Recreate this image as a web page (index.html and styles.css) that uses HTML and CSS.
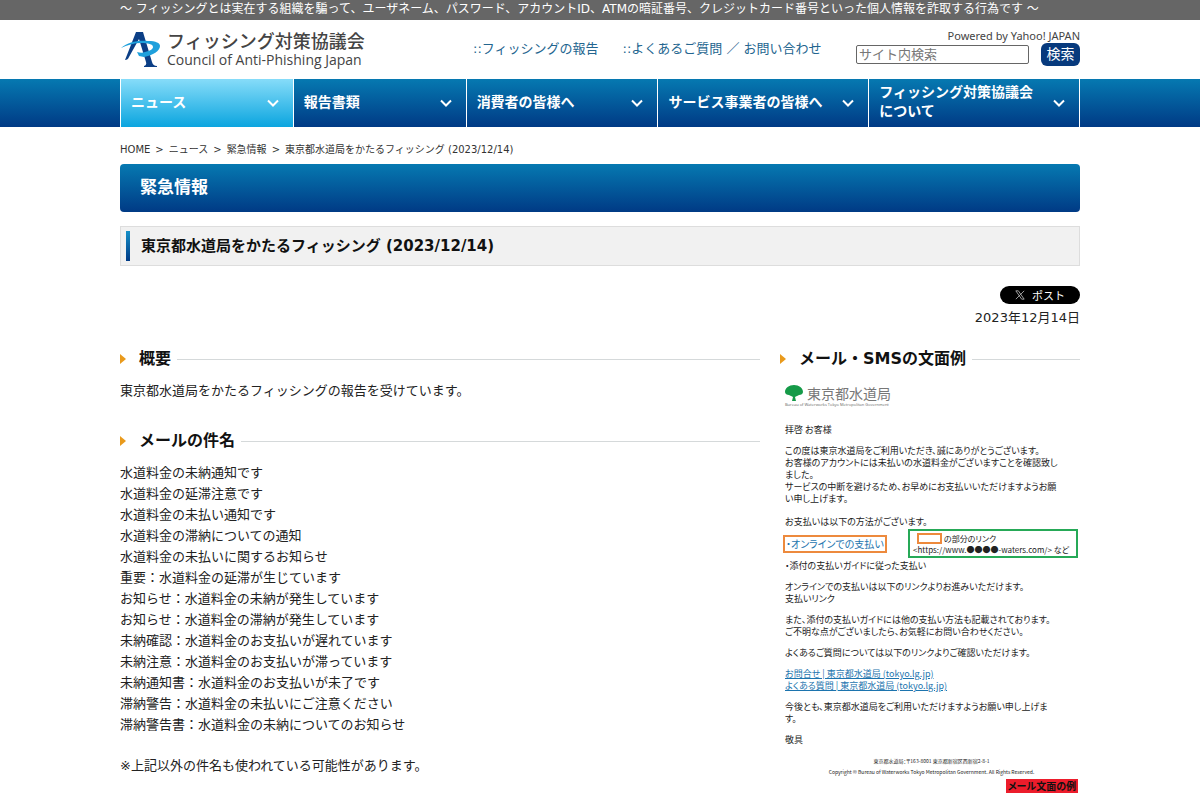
FILE: index.html
```html
<!DOCTYPE html>
<html lang="ja">
<head>
<meta charset="utf-8">
<title>フィッシング対策協議会 | 東京都水道局をかたるフィッシング</title>
<link rel="stylesheet" href="styles.css">
</head>
<body>
<div class="topbar"><p class="wrap">〜 フィッシングとは実在する組織を騙って、ユーザネーム、パスワード、アカウントID、ATMの暗証番号、クレジットカード番号といった個人情報を詐取する行為です 〜</p></div>
<header class="header wrap">
  <a class="logo" href="#">
    <svg class="logo-mark" viewBox="0 0 41 37" aria-hidden="true">
      <path fill="#0c3f86" d="M16 1h7l9 30q1 4 5 4v1H24v-1q3-1 2-4L19 8 9 26q-1 3-4 3l2-5z"/>
      <path fill="#1fa0dc" fill-rule="evenodd" d="M1 17C8 11 18 9 28 10c8 0 12 2 12 5 0 5-7 9-16 11l-5-1-2-4c3 1 6 1 8 0 5-1 8-3 8-5 0-3-5-4-12-4-7 0-14 2-20 5z"/>
    </svg>
    <span class="logo-text"><span class="logo-ja">フィッシング対策協議会</span><span class="logo-en">Council of Anti-Phishing Japan</span></span>
  </a>
  <nav class="links">
    <a href="#">::フィッシングの報告</a>
    <a href="#">::よくあるご質問 ／ お問い合わせ</a>
  </nav>
  <form class="search">
    <label for="q">Powered by Yahoo! JAPAN</label>
    <div class="search-row"><input id="q" type="text" placeholder="サイト内検索"><button type="button">検索</button></div>
  </form>
</header>
<nav class="gnav">
  <ul class="gnav-list wrap">
    <li class="current"><a href="#"><span>ニュース</span><svg viewBox="0 0 12 8"><path d="M1 1.500l5 5 5-5"/></svg></a></li>
    <li><a href="#"><span>報告書類</span><svg viewBox="0 0 12 8"><path d="M1 1.500l5 5 5-5"/></svg></a></li>
    <li><a href="#"><span>消費者の皆様へ</span><svg viewBox="0 0 12 8"><path d="M1 1.500l5 5 5-5"/></svg></a></li>
    <li><a href="#"><span>サービス事業者の皆様へ</span><svg viewBox="0 0 12 8"><path d="M1 1.500l5 5 5-5"/></svg></a></li>
    <li><a href="#"><span>フィッシング対策協議会<br>について</span><svg viewBox="0 0 12 8"><path d="M1 1.500l5 5 5-5"/></svg></a></li>
  </ul>
</nav>
<main class="wrap">
  <p class="crumbs"><a href="#">HOME</a><span>&gt;</span><a href="#">ニュース</a><span>&gt;</span><a href="#">緊急情報</a><span>&gt;</span>東京都水道局をかたるフィッシング (2023/12/14)</p>
  <h1 class="banner">緊急情報</h1>
  <h2 class="title">東京都水道局をかたるフィッシング (2023/12/14)</h2>
  <div class="meta">
    <button class="post" type="button"><svg viewBox="0 0 12 12"><path d="M1 1h3l7 10H8zM11 1L1 11"/></svg>ポスト</button>
    <p>2023年12月14日</p>
  </div>
  <div class="columns">
    <div>
      <section>
        <h3>概要</h3>
        <p class="text">東京都水道局をかたるフィッシングの報告を受けています。</p>
      </section>
      <section>
        <h3>メールの件名</h3>
        <p class="text">水道料金の未納通知です<br>水道料金の延滞注意です<br>水道料金の未払い通知です<br>水道料金の滞納についての通知<br>水道料金の未払いに関するお知らせ<br>重要：水道料金の延滞が生じています<br>お知らせ：水道料金の未納が発生しています<br>お知らせ：水道料金の滞納が発生しています<br>未納確認：水道料金のお支払いが遅れています<br>未納注意：水道料金のお支払いが滞っています<br>未納通知書：水道料金のお支払いが未了です<br>滞納警告：水道料金の未払いにご注意ください<br>滞納警告書：水道料金の未納についてのお知らせ</p>
        <p class="text note">※上記以外の件名も使われている可能性があります。</p>
      </section>
    </div>
    <aside>
      <h3>メール・SMSの文面例</h3>
      <div class="mail">
        <div class="mail-logo">
          <svg viewBox="0 0 18 16"><path fill="#159a48" d="M9 0c5 0 9 3 9 7 0 2-2 3-4 3-1 1-3 1-4 2l1 4H7l1-4c-1-1-3-1-4-2-2 0-4-1-4-3 0-4 4-7 9-7z"/></svg>
          <span>東京都水道局</span>
        </div>
        <p class="mail-sub">Bureau of Waterworks Tokyo Metropolitan Government</p>
        <p>拝啓 お客様</p>
        <p class="mail-lead">この度は東京水道局をご利用いただき、誠にありがとうございます。<br>お客様のアカウントには未払いの水道料金がございますことを確認致し<br>ました。<br>サービスの中断を避けるため、お早めにお支払いいただけますようお願<br>い申し上げます。</p>
        <p class="pay-intro">お支払いは以下の方法がございます。</p>
        <div class="pay">
          <a class="pay-online" href="#">・オンラインでの支払い</a>
          <div class="pay-note"><div class="pay-key"><i></i>の部分のリンク</div>&lt;https://www.●●●●-waters.com/&gt; など</div>
        </div>
        <p>・添付の支払いガイドに従った支払い</p>
        <p>オンラインでの支払いは以下のリンクよりお進みいただけます。<br>支払いリンク</p>
        <p>また、添付の支払いガイドには他の支払い方法も記載されております。<br>ご不明な点がございましたら、お気軽にお問い合わせください。</p>
        <p>よくあるご質問については以下のリンクよりご確認いただけます。</p>
        <p><a href="#">お問合せ | 東京都水道局 (tokyo.lg.jp)</a><br><a href="#">よくある質問 | 東京都水道局 (tokyo.lg.jp)</a></p>
        <p>今後とも、東京都水道局をご利用いただけますようお願い申し上げま<br>す。</p>
        <p>敬具</p>
        <div class="mail-foot">東京都水道局：〒163-8001 東京都新宿区西新宿2-8-1<br>Copyright © Bureau of Waterworks Tokyo Metropolitan Government. All Rights Reserved.</div>
        <strong class="mail-tag">メール文面の例</strong>
      </div>
    </aside>
  </div>
</main>
</body>
</html>
```
FILE: styles.css
```css
* { box-sizing: border-box; }
body, p, h1, h2, h3, ul { margin: 0; padding: 0; }
body { font: 13px/21px "DejaVu Sans", "Noto Sans CJK JP", sans-serif; color: #222; background: #fff; }
a { color: inherit; text-decoration: none; }
.wrap { max-width: 960px; margin: 0 auto; }
.topbar { background: #666; color: #fff; font-size: 12px; line-height: 18px; padding-bottom: 2px; }
.topbar p { white-space: nowrap; }

.header { display: grid; grid-template-columns: 353px 1fr auto; align-items: start; padding-bottom: 11px; }
.logo { display: flex; gap: 6px; padding-top: 11px; }
.logo-mark { width: 41px; height: 37px; }
.logo-text { display: flex; flex-direction: column; color: #444; white-space: nowrap; }
.logo-ja { font-size: 18px; line-height: 22px; font-weight: 500; }
.logo-en { font: 14px/14px "Open Sans", sans-serif; }
.links { display: flex; gap: 24px; padding-top: 18px; color: #23658f; white-space: nowrap; }
.search { display: flex; flex-direction: column; align-items: flex-end; padding-top: 9px; }
.search label { font: 11px/14px "Noto Sans", sans-serif; color: #444; }
.search-row { display: flex; align-items: center; gap: 12px; }
.search input { width: 173px; height: 19px; padding: 0 2px; border: 1px solid #666; border-radius: 2px; font: inherit; }
.search input::placeholder { color: #777; }
.search button { width: 39px; height: 23px; padding: 0; border: 0; border-radius: 6px; background: #073a7d; color: #fff; font: inherit; font-size: 14px; line-height: 23px; }

.gnav { background: linear-gradient(#0679b1, #003a85); }
.gnav-list { display: grid; grid-template-columns: 173fr 173fr 192fr 211fr 211fr; list-style: none; border-right: 1px solid #fff; }
.gnav li { border-left: 1px solid #fff; }
.gnav .current { background: linear-gradient(#86dcf9, #0ba5df); }
.gnav a { display: flex; align-items: center; justify-content: space-between; height: 48px; padding: 0 14px 0 10px; color: #fff; font-size: 14px; line-height: 19px; font-weight: bold; white-space: nowrap; }
.gnav span { padding-bottom: 2px; }
.gnav svg { width: 12px; height: 8px; fill: none; stroke: #fff; stroke-width: 2; }

.crumbs { padding-top: 15px; font-size: 10px; line-height: 16px; color: #333; }
.crumbs span { margin: 0 5px; }
.banner { margin-top: 6px; padding: 0 20px 2px; border-radius: 4px; background: linear-gradient(#0679b1, #003a85); color: #fff; font-size: 17px; line-height: 46px; }
.title { display: flex; align-items: center; gap: 11px; margin-top: 14px; padding: 4px 5px; border: 1px solid #ddd; background: #f1f1f1; color: #111; font-size: 15px; line-height: 30px; }
.title::before { content: ""; width: 4px; height: 30px; background: linear-gradient(#1590c8, #003a85); }
.meta { display: flex; flex-direction: column; align-items: flex-end; padding-top: 20px; }
.post { display: flex; align-items: center; justify-content: center; gap: 7px; width: 80px; height: 18px; margin-bottom: 3px; padding: 0; border: 0; border-radius: 9px; background: #000; color: #fff; font: 11px/18px "Noto Sans CJK JP", sans-serif; }
.post svg { width: 10px; height: 10px; fill: none; stroke: #bbb; }

.columns { display: grid; grid-template-columns: 1fr 300px; gap: 20px; padding-top: 18px; }
h3 { display: flex; align-items: center; color: #111; font-size: 16px; line-height: 26px; }
h3::before { content: ""; margin-right: 13px; border: solid transparent; border-width: 5px 0 5px 6px; border-left-color: #e99a1c; }
h3::after { content: ""; flex: 1; height: 1px; margin-left: 6px; background: #d5d9da; }
section .text { padding-top: 8px; }
section + section { padding-top: 27px; }
section .note { padding-top: 20px; }

.mail { padding: 12px 2px 0 5px; font-family: "Noto Sans CJK JP", sans-serif; font-size: 9px; line-height: 12px; font-feature-settings: "palt"; white-space: nowrap; }
.mail p { margin-bottom: 9px; }
.mail .mail-lead { margin-bottom: 11px; }
.mail a { color: #1c74ae; text-decoration: underline; }
.mail-logo { display: flex; align-items: center; gap: 4px; font-size: 14px; line-height: 18px; color: #777; }
.mail-logo svg { width: 18px; height: 16px; }
.mail .mail-sub { margin-bottom: 16px; font: 4px/6px "Open Sans", sans-serif; color: #666; }
.mail .pay-intro { margin-bottom: 1px; }
.pay { display: flex; align-items: center; justify-content: space-between; margin: 0 0 2px -2px; }
.mail .pay-online { padding: 1px; border: 2px solid #ed8a3d; font-size: 10px; line-height: 12px; text-decoration: none; }
.pay-note { width: 170px; padding: 2px 2px 1px 3px; border: 2px solid #26a957; font-size: 8px; line-height: 11px; }
.pay-key { display: flex; align-items: center; gap: 2px; padding-left: 4px; }
.pay-key i { width: 25px; height: 11px; border: 2px solid #ed8a3d; }
.mail-foot { margin: 4px 0 2px; text-align: center; font-size: 5px; line-height: 11px; }
.mail-tag { display: block; width: fit-content; margin-left: auto; padding: 1px 2px; background: #ec1c2b; color: #111; font-size: 10px; }
```
